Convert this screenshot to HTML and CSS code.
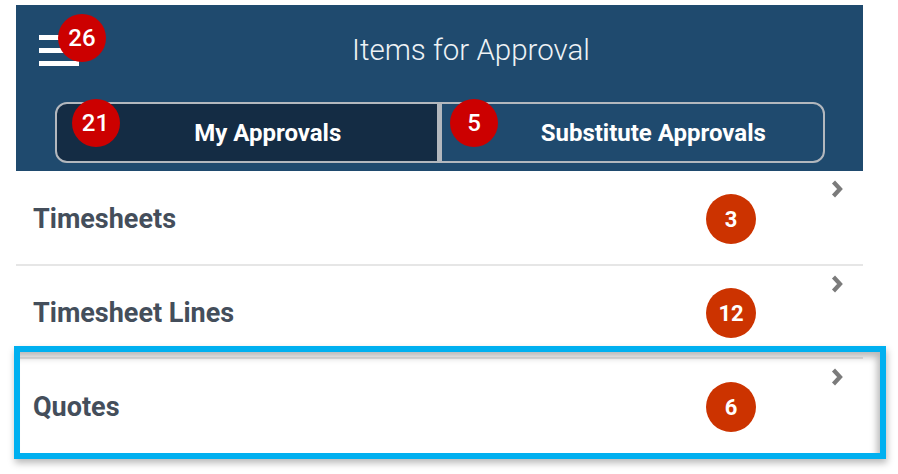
FILE: index.html
```html
<!DOCTYPE html>
<html lang="en">
<head>
<meta charset="utf-8">
<title>Items for Approval</title>
<link rel="stylesheet" href="styles.css">
</head>
<body>
<div class="page">
  <div class="panel">
    <header class="header">
      <div class="topbar">
        <div class="menu">
          <span class="menu-line"></span>
          <span class="menu-line"></span>
          <span class="menu-line"></span>
          <span class="badge badge-menu">26</span>
        </div>
        <h1 class="title">Items for Approval</h1>
      </div>
      <div class="segments">
        <div class="segment segment-active">
          <span class="badge badge-seg badge-seg-left">21</span>
          <span class="segment-label">My Approvals</span>
        </div>
        <div class="segment segment-right">
          <span class="badge badge-seg badge-seg-right">5</span>
          <span class="segment-label">Substitute Approvals</span>
        </div>
      </div>
    </header>
    <ul class="list">
      <li class="row">
        <span class="row-label">Timesheets</span>
        <span class="count">3</span>
        <svg class="chev" viewBox="0 0 12 18" width="12" height="18"><polyline points="2.5,2 9,9 2.5,16" fill="none" stroke="#7b7b7b" stroke-width="4.2"/></svg>
      </li>
      <li class="row">
        <span class="row-label">Timesheet Lines</span>
        <span class="count">12</span>
        <svg class="chev" viewBox="0 0 12 18" width="12" height="18"><polyline points="2.5,2 9,9 2.5,16" fill="none" stroke="#7b7b7b" stroke-width="4.2"/></svg>
      </li>
      <li class="row">
        <span class="row-label">Quotes</span>
        <span class="count">6</span>
        <svg class="chev" viewBox="0 0 12 18" width="12" height="18"><polyline points="2.5,2 9,9 2.5,16" fill="none" stroke="#7b7b7b" stroke-width="4.2"/></svg>
      </li>
    </ul>
  </div>
  <div class="highlight"></div>
</div>
</body>
</html>
```
FILE: styles.css
```css
* { box-sizing: border-box; }
html, body { margin: 0; padding: 0; background: #ffffff; }
body { font-family: Roboto, "Liberation Sans", Arial, sans-serif; }

.page {
  position: relative;
  width: 898px;
  height: 474px;
  padding: 5px 0 0 16px;
}

.panel { width: 847px; }

.header {
  background: #1f4a6e;
  height: 166px;
}

.topbar {
  display: flex;
  align-items: center;
  height: 90px;
  padding-left: 23px;
}

.menu {
  position: relative;
  width: 40px;
  height: 31px;
  display: flex;
  flex-direction: column;
  justify-content: space-between;
}
.menu-line {
  display: block;
  height: 5px;
  background: #ffffff;
}

.badge {
  position: absolute;
  display: flex;
  align-items: center;
  justify-content: center;
  width: 48px;
  height: 48px;
  border-radius: 50%;
  background: #cc0000;
  color: #ffffff;
  font-size: 24px;
  font-weight: 500;
}
.badge-menu { left: 19px; top: -21px; }

.title {
  flex: 1;
  margin: 0;
  text-align: center;
  color: #eef2f5;
  font-size: 29.5px;
  font-weight: 300;
}

.segments {
  display: flex;
  width: 770px;
  height: 61px;
  margin: 7px auto 0;
}
.segment {
  position: relative;
  flex: 1;
  display: flex;
  align-items: center;
  justify-content: center;
  padding-left: 42px;
  border: 2px solid #b3b8be;
  color: #ffffff;
  font-size: 24px;
  font-weight: 700;
}
.segment-active {
  background: #142c44;
  border-radius: 12px 0 0 12px;
}
.segment-right {
  border-radius: 0 12px 12px 0;
  border-left-width: 3px;
}
.badge-seg { top: -5px; }
.badge-seg-left { left: 15px; }
.badge-seg-right { left: 8px; }

.list {
  list-style: none;
  margin: 0;
  padding: 0;
}
.row {
  display: flex;
  align-items: center;
  height: 95px;
  padding: 3px 20px 0 17px;
  border-bottom: 2px solid #e6e6e6;
}
.row + .row { height: 93px; }
.row:last-child { border-bottom: 0; }
.row-label {
  flex: 1;
  color: #444e5b;
  font-size: 27px;
  font-weight: 700;
}
.count {
  display: flex;
  align-items: center;
  justify-content: center;
  width: 50px;
  height: 50px;
  border-radius: 50%;
  background: #cc3300;
  color: #ffffff;
  font-size: 22px;
  font-weight: 700;
}
.chev {
  align-self: flex-start;
  margin: 6px 0 0 75px;
}

.highlight {
  position: absolute;
  left: 14px;
  top: 346px;
  width: 872px;
  height: 113px;
  border: 6px solid #00b0f0;
  box-shadow: 1px 4px 7px rgba(0, 0, 0, 0.28), inset -5px 7px 7px -2px rgba(0, 0, 0, 0.28);
}
```
